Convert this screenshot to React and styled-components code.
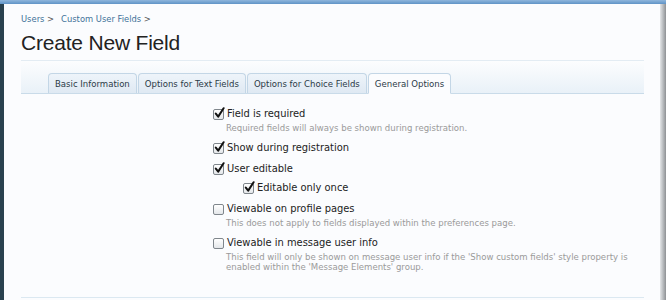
import React from "react";
import styled, { createGlobalStyle } from "styled-components";

const GlobalStyle = createGlobalStyle`
  html, body {
    margin: 0;
    padding: 0;
    background: #f9fbfd;
  }
  body {
    font-family: "DejaVu Sans Condensed", "DejaVu Sans", Verdana, sans-serif;
    font-stretch: condensed;
    color: #222;
  }
`;

const Frame = styled.div`
  width: 666px;
  height: 300px;
  overflow: hidden;
  display: flex;
  flex-direction: column;
`;

const TopBar = styled.div`
  height: 4px;
  flex: none;
  background: linear-gradient(to bottom, #8fb6dc, #5f93c6);
`;

const Body = styled.div`
  flex: 1;
  display: flex;
  min-height: 0;
`;

const LeftEdge = styled.div`
  width: 4px;
  flex: none;
  background: #29414f;
`;

const RightEdge = styled.div`
  width: 6px;
  flex: none;
  background: linear-gradient(to right, #e4e6e8, #b9bcbf 50%, #8e9194);
`;

const Content = styled.div`
  flex: 1;
  padding: 9px 16px 0 17px;
  background: #fbfcfe;
  display: flex;
  flex-direction: column;
`;

const Breadcrumb = styled.div`
  display: flex;
  gap: 7px;
  font-size: 9.3px;
  line-height: 12px;
  height: 12px;
`;

const Crumb = styled.a`
  color: #3f7299;
  text-decoration: none;
  &::after {
    content: " >";
    color: #555;
  }
`;

const Title = styled.h1`
  margin: 5px 0 0;
  font-family: "Liberation Sans", Arial, sans-serif;
  font-stretch: normal;
  font-weight: normal;
  font-size: 21px;
  line-height: 26px;
  height: 26px;
  color: #222;
  letter-spacing: -0.2px;
`;

const TabStrip = styled.div`
  margin-top: 4px;
  height: 32px;
  border-top: 1px solid #e3ecf3;
  border-bottom: 1px solid #c9dbe9;
  background: linear-gradient(to bottom, #fcfdfe, #e9f1f8);
  display: flex;
  align-items: flex-end;
  padding-left: 27px;
  gap: 1px;
`;

const Tab = styled.div`
  height: 19px;
  margin-bottom: ${(p) => (p.$active ? "-1px" : "0")};
  padding: 0 6px;
  border: 1px solid #c3d6e6;
  border-bottom: ${(p) => (p.$active ? "1px solid #fbfcfe" : "none")};
  border-radius: 4px 4px 0 0;
  background: ${(p) =>
    p.$active
      ? "#fbfcfe"
      : "linear-gradient(to bottom, #eef4fa, #dfe9f3)"};
  font-size: 9.5px;
  line-height: 20px;
  color: #2b3a46;
  white-space: nowrap;
`;

const Options = styled.ul`
  list-style: none;
  margin: 13px 0 0;
  padding: 0 0 0 192px;
  flex: 1;
`;

const Item = styled.li`
  margin-bottom: 7px;
  padding-left: ${(p) => (p.$nested ? "30px" : "0")};
  margin-top: ${(p) => (p.$nested ? "-2px" : "0")};
`;

const Row = styled.label`
  display: flex;
  align-items: center;
  gap: 3px;
  font-size: 11px;
  line-height: 14px;
  color: #222;
`;

const Box = styled.span`
  position: relative;
  width: 9px;
  height: 9px;
  flex: none;
  border: 1px solid #7f868c;
  border-radius: 2px;
  background: linear-gradient(to bottom, #ffffff, #e4e7ea);

  svg {
    position: absolute;
    left: 0px;
    top: -3px;
  }
`;

const Hint = styled.div`
  margin: 1.5px 0 0 13px;
  padding-bottom: 1px;
  font-size: 9.5px;
  line-height: 10.6px;
  color: #9a9a9a;
  max-width: 410px;
`;

const BottomLine = styled.div`
  height: 1px;
  background: #dbe8f1;
  margin-bottom: 2px;
`;

const Check = ({ checked }) => (
  <Box>
    {checked && (
      <svg width="11" height="12" viewBox="0 0 11 12">
        <path
          d="M1.8 6.6 L4.2 9.6 L9.6 1.2"
          fill="none"
          stroke="#111"
          strokeWidth="2"
          strokeLinecap="round"
          strokeLinejoin="round"
        />
      </svg>
    )}
  </Box>
);

const options = [
  {
    label: "Field is required",
    checked: true,
    hint: "Required fields will always be shown during registration.",
  },
  { label: "Show during registration", checked: true },
  { label: "User editable", checked: true },
  { label: "Editable only once", checked: true, nested: true },
  {
    label: "Viewable on profile pages",
    checked: false,
    hint: "This does not apply to fields displayed within the preferences page.",
  },
  {
    label: "Viewable in message user info",
    checked: false,
    hint: "This field will only be shown on message user info if the 'Show custom fields' style property is enabled within the 'Message Elements' group.",
  },
];

const tabs = [
  "Basic Information",
  "Options for Text Fields",
  "Options for Choice Fields",
  "General Options",
];

export default function App() {
  return (
    <>
      <GlobalStyle />
      <Frame>
        <TopBar />
        <Body>
          <LeftEdge />
          <Content>
            <Breadcrumb>
              <Crumb href="#">Users</Crumb>
              <Crumb href="#">Custom User Fields</Crumb>
            </Breadcrumb>
            <Title>Create New Field</Title>
            <TabStrip>
              {tabs.map((t, i) => (
                <Tab key={t} $active={i === tabs.length - 1}>
                  {t}
                </Tab>
              ))}
            </TabStrip>
            <Options>
              {options.map((o) => (
                <Item key={o.label} $nested={o.nested}>
                  <Row>
                    <Check checked={o.checked} />
                    {o.label}
                  </Row>
                  {o.hint && <Hint>{o.hint}</Hint>}
                </Item>
              ))}
            </Options>
            <BottomLine />
          </Content>
          <RightEdge />
        </Body>
      </Frame>
    </>
  );
}
